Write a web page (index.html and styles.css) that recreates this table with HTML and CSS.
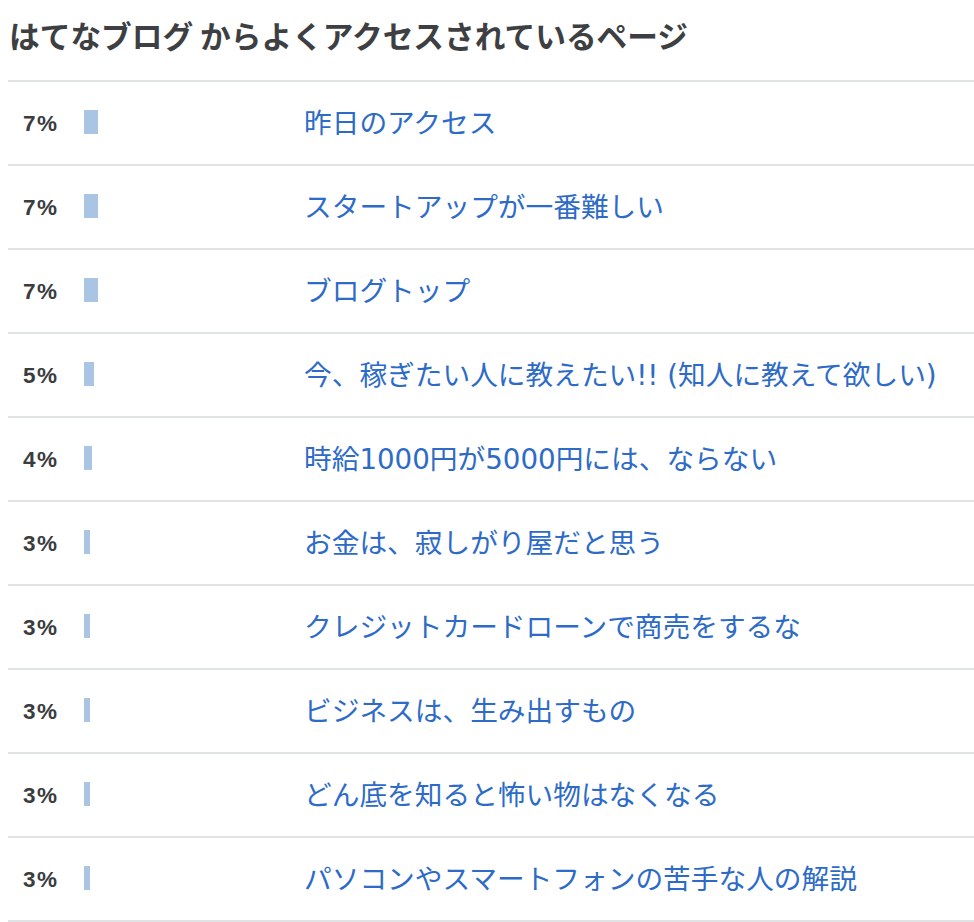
FILE: index.html
```html
<!DOCTYPE html>
<html lang="ja">
<head>
<meta charset="utf-8">
<link rel="stylesheet" href="styles.css">
</head>
<body>
<h2 class="title">はてなブログ からよくアクセスされているページ</h2>
<ul class="list">
  <li class="row"><span class="pct">7%</span><span class="bar-cell"><span class="bar" style="width:14px"></span></span><a class="link" href="#">昨日のアクセス</a></li>
  <li class="row"><span class="pct">7%</span><span class="bar-cell"><span class="bar" style="width:14px"></span></span><a class="link" href="#">スタートアップが一番難しい</a></li>
  <li class="row"><span class="pct">7%</span><span class="bar-cell"><span class="bar" style="width:14px"></span></span><a class="link" href="#">ブログトップ</a></li>
  <li class="row"><span class="pct">5%</span><span class="bar-cell"><span class="bar" style="width:10px"></span></span><a class="link" href="#">今、稼ぎたい人に教えたい!! (知人に教えて欲しい)</a></li>
  <li class="row"><span class="pct">4%</span><span class="bar-cell"><span class="bar" style="width:8px"></span></span><a class="link" href="#">時給1000円が5000円には、ならない</a></li>
  <li class="row"><span class="pct">3%</span><span class="bar-cell"><span class="bar" style="width:6px"></span></span><a class="link" href="#">お金は、寂しがり屋だと思う</a></li>
  <li class="row"><span class="pct">3%</span><span class="bar-cell"><span class="bar" style="width:6px"></span></span><a class="link" href="#">クレジットカードローンで商売をするな</a></li>
  <li class="row"><span class="pct">3%</span><span class="bar-cell"><span class="bar" style="width:6px"></span></span><a class="link" href="#">ビジネスは、生み出すもの</a></li>
  <li class="row"><span class="pct">3%</span><span class="bar-cell"><span class="bar" style="width:6px"></span></span><a class="link" href="#">どん底を知ると怖い物はなくなる</a></li>
  <li class="row"><span class="pct">3%</span><span class="bar-cell"><span class="bar" style="width:6px"></span></span><a class="link" href="#">パソコンやスマートフォンの苦手な人の解説</a></li>
</ul>
</body>
</html>
```

FILE: styles.css
```css
html, body {
  margin: 0;
  padding: 0;
  background: #ffffff;
}
body {
  margin: 8px 0 0 8px;
  font-family: "Noto Sans CJK JP", "Noto Sans", sans-serif;
}
.title {
  margin: 0;
  padding: 7px 0 25px 1px;
  font-size: 30.7px;
  line-height: 40px;
  font-weight: 700;
  color: #3d3f42;
  white-space: nowrap;
}
.list {
  list-style: none;
  margin: 0;
  padding: 0;
  border-bottom: 2px solid #dfe3e6;
}
.row {
  display: grid;
  grid-template-columns: 76px 220px 1fr;
  align-items: center;
  height: 82px;
  border-top: 2px solid #dfe3e6;
}
.pct {
  padding-left: 15px;
  font-family: "Liberation Sans", Arial, sans-serif;
  font-weight: 700;
  font-size: 22.5px;
  letter-spacing: 1.4px;
  color: #3a3c40;
  line-height: 1;
  margin-top: 3px;
}
.bar-cell {
  display: flex;
  align-items: center;
  height: 24px;
  margin-top: -3px;
}
.bar {
  display: block;
  height: 24px;
  background: #aac5e4;
}
.link {
  font-family: "DejaVu Sans", "Noto Sans CJK JP", sans-serif;
  font-size: 27.7px;
  line-height: 1.2;
  color: #2d6bc7;
  text-decoration: none;
  white-space: nowrap;
  margin-top: 2px;
}
```
